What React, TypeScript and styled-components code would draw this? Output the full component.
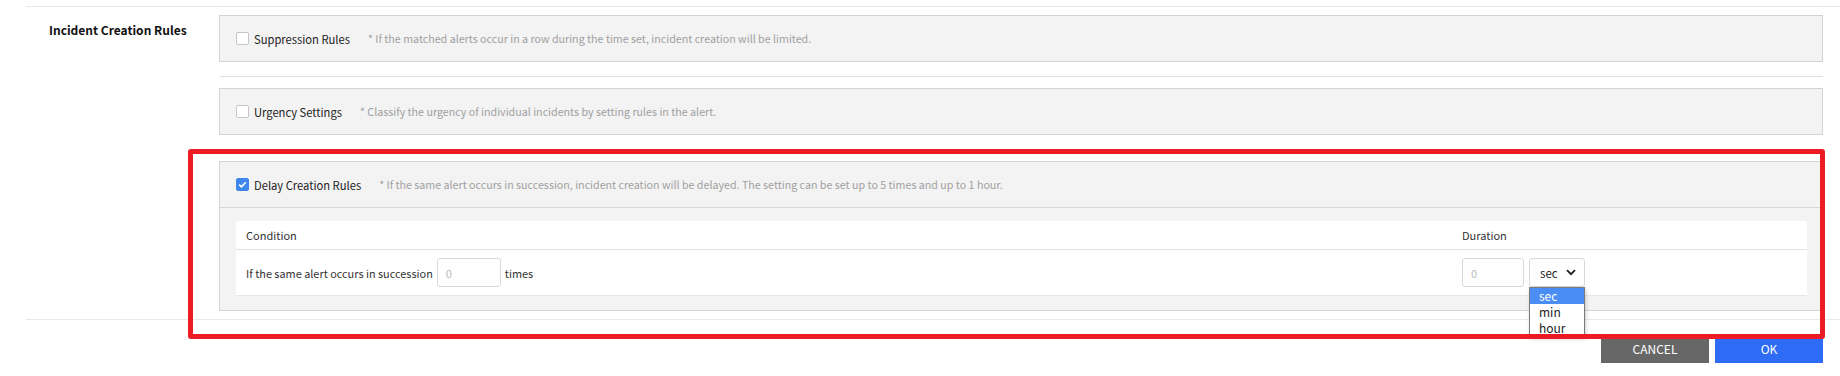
import { useState } from 'react';
import { styled, createGlobalStyle } from 'styled-components';

const GlobalStyle = createGlobalStyle`
    body {
        margin: 0;
        background: #ffffff;
        font-family: "Noto Sans CJK KR", "Noto Sans", sans-serif;
        color: #333333;
    }
    * {
        box-sizing: border-box;
    }
`;

interface RuleProps {
    title: string;
    hint: string;
    checked: boolean;
    children?: React.ReactNode;
}

function CheckMark({ checked }: { checked: boolean }) {
    return (
        <CheckBox $checked={checked}>
            {checked && (
                <svg width="11" height="11" viewBox="0 0 11 11">
                    <polyline points="2.2,5.6 4.5,7.9 8.8,3.2" fill="none" stroke="#ffffff" strokeWidth="1.6" />
                </svg>
            )}
        </CheckBox>
    );
}

function Rule({ title, hint, checked, children }: RuleProps) {
    return (
        <RuleBox>
            <RuleHeader $open={!!children}>
                <CheckMark checked={checked} />
                <RuleTitle>{title}</RuleTitle>
                <RuleHint>{hint}</RuleHint>
            </RuleHeader>
            {children && <RuleBody>{children}</RuleBody>}
        </RuleBox>
    );
}

const units = ['sec', 'min', 'hour'];

function App() {
    const [unit] = useState<string>('sec');

    return (
        <Page>
            <GlobalStyle />
            <FormRow>
                <RowLabel>Incident Creation Rules</RowLabel>
                <RowContent>
                    <Rule
                        title="Suppression Rules"
                        hint="* If the matched alerts occur in a row during the time set, incident creation will be limited."
                        checked={false}
                    />
                    <Divider />
                    <Rule
                        title="Urgency Settings"
                        hint="* Classify the urgency of individual incidents by setting rules in the alert."
                        checked={false}
                    />
                    <Divider />
                    <Rule
                        title="Delay Creation Rules"
                        hint="* If the same alert occurs in succession, incident creation will be delayed. The setting can be set up to 5 times and up to 1 hour."
                        checked={true}
                    >
                        <Table>
                            <HeadCell>Condition</HeadCell>
                            <HeadCell>Duration</HeadCell>
                            <BodyCell>
                                If the same alert occurs in succession
                                <NumberInput placeholder="0" $width={64} />
                                times
                            </BodyCell>
                            <BodyCell $tight>
                                <NumberInput placeholder="0" $width={62} />
                                <SelectWrap>
                                    <SelectBox>
                                        {unit}
                                        <svg width="10" height="7" viewBox="0 0 10 7">
                                            <polyline points="1,1.2 5,5.2 9,1.2" fill="none" stroke="#222" strokeWidth="1.9" />
                                        </svg>
                                    </SelectBox>
                                    <OptionList>
                                        {units.map((u) => (
                                            <OptionItem key={u} $active={u === unit}>
                                                {u}
                                            </OptionItem>
                                        ))}
                                    </OptionList>
                                </SelectWrap>
                            </BodyCell>
                        </Table>
                    </Rule>
                </RowContent>
            </FormRow>
            <Footer>
                <ActionButton $kind="cancel">CANCEL</ActionButton>
                <ActionButton $kind="ok">OK</ActionButton>
            </Footer>
            <Highlight />
        </Page>
    );
}

const Page = styled.div`
    position: relative;
    width: 1840px;
    height: 376px;
    padding-top: 6px;
`;

const FormRow = styled.div`
    margin-left: 26px;
    display: grid;
    grid-template-columns: 193px 1fr;
    border-top: 1px solid #e9e9e9;
    border-bottom: 1px solid #e9e9e9;
    padding-right: 17px;
`;

const RowLabel = styled.div`
    padding: 15px 0 0 23px;
    font-size: 12px;
    line-height: 16px;
    font-weight: 700;
    color: #111;
`;

const RowContent = styled.div`
    display: flex;
    flex-direction: column;
    padding: 8px 0 8px;
`;

const Divider = styled.div`
    height: 1px;
    background-color: #dedede;
    margin: 14px 0 11px 1px;
`;

const RuleBox = styled.div`
    border: 1px solid #d3d3d3;
    background-color: #f3f3f3;
`;

const RuleHeader = styled.div<{ $open: boolean }>`
    height: ${(p) => (p.$open ? '46px' : '45px')};
    display: flex;
    align-items: center;
    padding: 0 16px;
    border-bottom: ${(p) => (p.$open ? '1px solid #d6d6d6' : 'none')};
`;

const CheckBox = styled.span<{ $checked: boolean }>`
    width: 13px;
    height: 13px;
    border-radius: 2px;
    display: inline-flex;
    align-items: center;
    justify-content: center;
    border: 1px solid ${(p) => (p.$checked ? '#3f86ef' : '#c6c6c6')};
    background-color: ${(p) => (p.$checked ? '#3f86ef' : '#ffffff')};
    flex-shrink: 0;
`;

const RuleTitle = styled.span`
    margin-left: 5px;
    font-size: 11.2px;
    color: #222;
`;

const RuleHint = styled.span`
    margin-left: 18px;
    font-size: 10.7px;
    color: #a0a0a0;
`;

const RuleBody = styled.div`
    padding: 13px 15px 14px 16px;
`;

const Table = styled.div`
    display: grid;
    grid-template-columns: 1fr 355px;
    background-color: #ffffff;
    border-bottom: 1px solid #e6e6e6;
`;

const HeadCell = styled.div`
    height: 29px;
    display: flex;
    align-items: center;
    padding: 0 10px;
    border-bottom: 1px solid #e4e4e4;
    font-size: 11px;
    color: #333;
`;

const BodyCell = styled.div<{ $tight?: boolean }>`
    height: 45px;
    display: flex;
    align-items: center;
    gap: ${(p) => (p.$tight ? '5px' : '4px')};
    padding: 0 10px;
    font-size: 10.9px;
    color: #333;
`;

const NumberInput = styled.input<{ $width: number }>`
    width: ${(p) => p.$width}px;
    height: 29px;
    border: 1px solid #d6dae0;
    border-radius: 3px;
    padding: 0 8px;
    font-family: inherit;
    font-size: 11px;
    outline: none;

    &::placeholder {
        color: #b8b8b8;
    }
`;

const SelectWrap = styled.div`
    position: relative;
`;

const SelectBox = styled.div`
    width: 56px;
    height: 29px;
    border: 1px solid #d6dae0;
    border-radius: 3px;
    display: flex;
    align-items: center;
    justify-content: space-between;
    padding: 0 8px 0 10px;
    font-size: 11.5px;
    color: #222;
    background: #ffffff;
`;

const OptionList = styled.div`
    position: absolute;
    top: 100%;
    left: 0;
    width: 56px;
    border: 1px solid #7a7a7a;
    background: #ffffff;
    box-shadow: 1px 2px 4px rgba(0, 0, 0, 0.2);
    z-index: 5;
`;

const OptionItem = styled.div<{ $active: boolean }>`
    height: 16px;
    line-height: 16px;
    padding-left: 9px;
    font-size: 12px;
    color: ${(p) => (p.$active ? '#ffffff' : '#222')};
    background-color: ${(p) => (p.$active ? '#4a8ef5' : '#ffffff')};
`;

const Footer = styled.div`
    display: flex;
    justify-content: flex-end;
    gap: 6px;
    padding: 14px 17px 0 0;
`;

const ActionButton = styled.button<{ $kind: 'ok' | 'cancel' }>`
    width: 108px;
    height: 29px;
    border: 0;
    font-family: inherit;
    font-size: 12px;
    color: #ffffff;
    background-color: ${(p) => (p.$kind === 'ok' ? '#2f6cf5' : '#676767')};
    cursor: pointer;
`;

const Highlight = styled.div`
    position: absolute;
    left: 188px;
    top: 149px;
    width: 1637px;
    height: 190px;
    border: 5px solid #ed1c24;
    border-radius: 3px;
    pointer-events: none;
    z-index: 10;
`;

export default App;
